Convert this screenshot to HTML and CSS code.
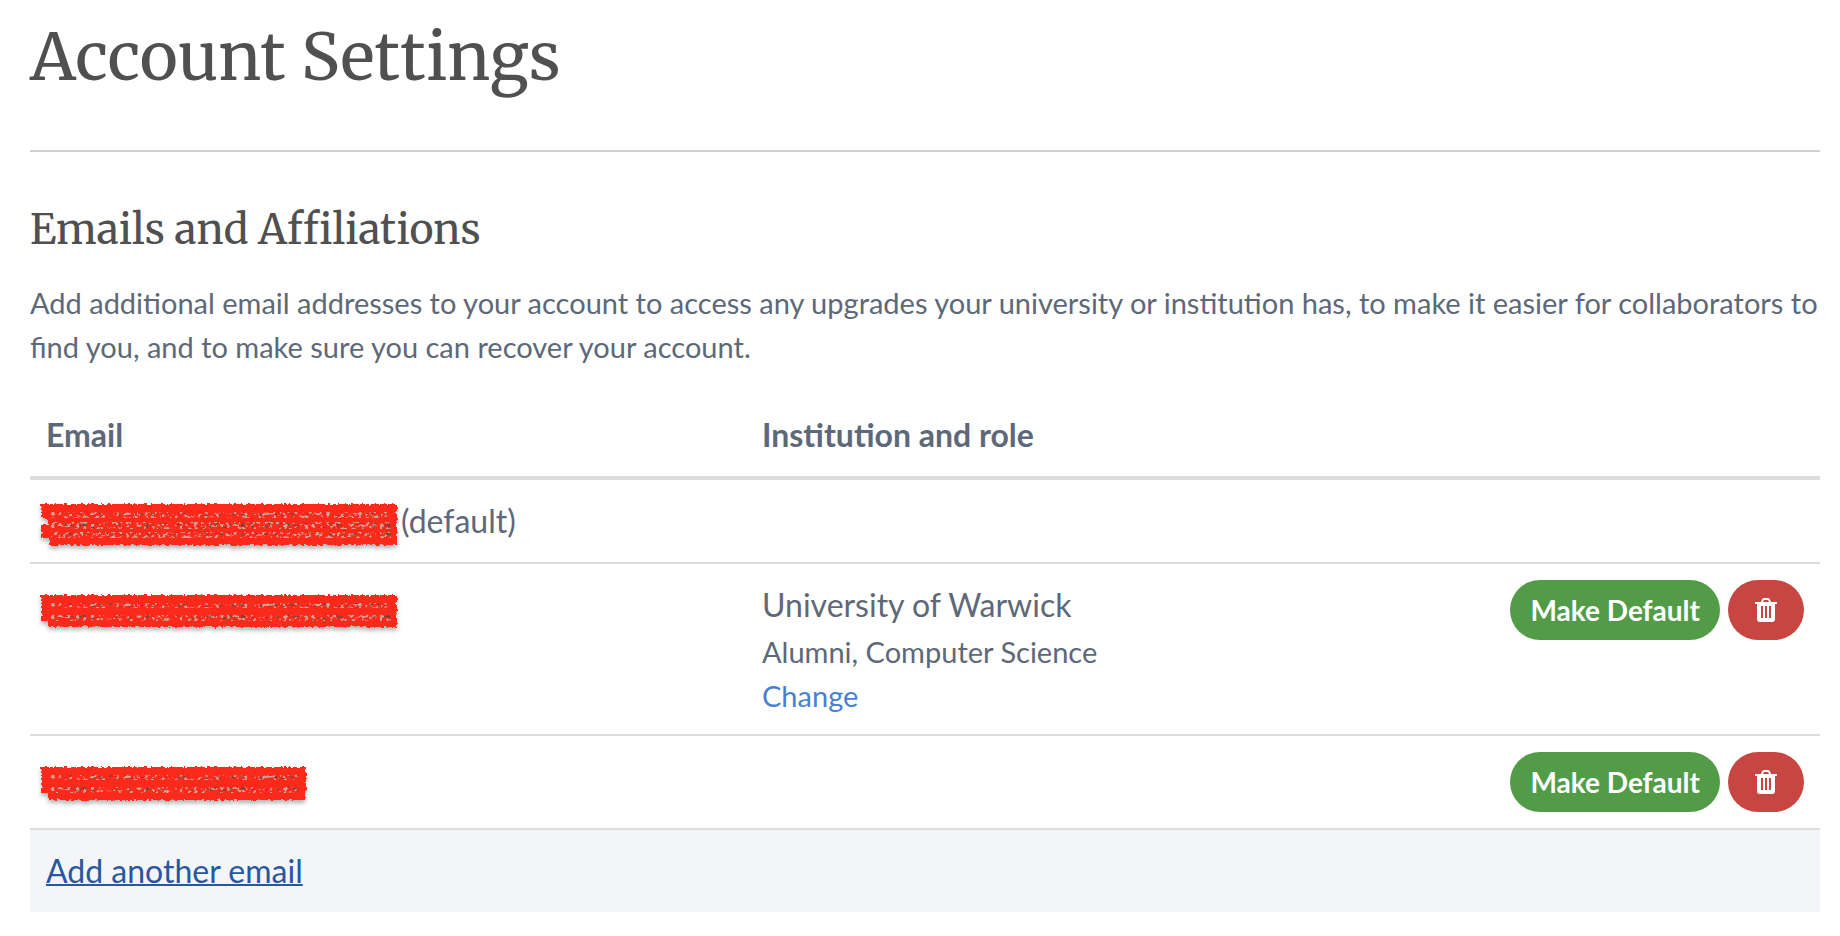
FILE: index.html
```html
<!DOCTYPE html>
<html lang="en">
  <head>
    <meta charset="UTF-8" />
    <meta name="viewport" content="width=device-width, initial-scale=1.0" />
    <title>Account Settings</title>
    <link rel="stylesheet" href="styles.css">
  </head>
  <body>
    <!-- shared svg shapes -->
    <svg class="defs" aria-hidden="true">
      <defs>
        <filter id="rough" x="-5%" y="-20%" width="110%" height="140%">
          <feTurbulence type="fractalNoise" baseFrequency="0.3" numOctaves="2" seed="4" result="noise" />
          <feDisplacementMap in="SourceGraphic" in2="noise" scale="5" xChannelSelector="R" yChannelSelector="G" />
        </filter>
        <filter id="grain" x="0" y="0" width="100%" height="100%">
          <feTurbulence type="fractalNoise" baseFrequency="0.28 0.34" numOctaves="2" seed="9" />
          <feColorMatrix values="0 0 0 0 0  0 0 0 0 0  0 0 0 0 0  9 0 0 0 -4.8" result="grain" />
          <feComposite in="SourceGraphic" in2="grain" operator="in" />
        </filter>
        <filter id="grain-dark" x="0" y="0" width="100%" height="100%">
          <feTurbulence type="fractalNoise" baseFrequency="0.22 0.34" numOctaves="2" seed="21" />
          <feColorMatrix values="0 0 0 0 0  0 0 0 0 0  0 0 0 0 0  9 0 0 0 -5.3" result="grain" />
          <feComposite in="SourceGraphic" in2="grain" operator="in" />
        </filter>
        <symbol id="trash" viewBox="0 0 22 24">
          <path fill="currentColor" fill-rule="evenodd" d="M6 4 7 1.500Q7.500 0 9 0h4q1.500 0 2 1.500L16 4h6v2h-2v15q0 3-3 3H5q-3 0-3-3V6H0V4zM8 4h6l-.6-1.600Q13.200 2 12.800 2H9.200q-.4 0-.6.4zM6 8v12h2V8zM10 8v12h2V8zM14 8v12h2V8z" />
        </symbol>
      </defs>
    </svg>

    <main class="container">
      <div class="page-header">
        <h1>Account Settings</h1>
      </div>

      <h2>Emails and Affiliations</h2>
      <p class="intro">
        Add additional email addresses to your account to access any upgrades your university or institution has, to make it easier for collaborators to find you, and to make sure you can recover your account.
      </p>

      <table class="emails-table">
        <thead>
          <tr>
            <th class="col-email" scope="col">Email</th>
            <th scope="col">Institution and role</th>
            <td></td>
          </tr>
        </thead>
        <tbody>
          <tr>
            <td>
              <div class="email">
                <svg class="scribble" width="356" height="42" role="img" aria-label="Hidden email">
                  <path class="ink" filter="url(#rough)" d="M0 0H356V41H8V34H0V21H7V15H0z" />
                  <path class="speck" filter="url(#grain)" d="M10 8H350V14H10zM10 18H350V25H10zM10 28H350V34H10z" />
                  <path class="speck-dark" filter="url(#grain-dark)" d="M24 9H350V12H24zM24 19H350V24H24zM24 29H350V31H24z" />
                </svg>
                <span>(default)</span>
              </div>
            </td>
            <td></td>
            <td></td>
          </tr>
          <tr>
            <td>
              <div class="email">
                <svg class="scribble" width="356" height="35" role="img" aria-label="Hidden email">
                  <path class="ink" filter="url(#rough)" d="M0 0H356V32H8V26H0z" />
                  <path class="speck" filter="url(#grain)" d="M10 8H350V13H10zM10 20H350V26H10z" />
                  <path class="speck-dark" filter="url(#grain-dark)" d="M24 8H350V12H24zM24 20H350V24H24z" />
                </svg>
              </div>
            </td>
            <td>
              <div>University of Warwick</div>
              <div class="small">Alumni, Computer Science</div>
              <div class="small"><a class="change-link" href="#">Change</a></div>
            </td>
            <td>
              <div class="actions">
                <button class="btn btn-success" type="button">Make Default</button>
                <button class="btn btn-danger" type="button" aria-label="Remove">
                  <svg width="22" height="24" aria-hidden="true"><use href="#trash" /></svg>
                </button>
              </div>
            </td>
          </tr>
          <tr>
            <td>
              <div class="email">
                <svg class="scribble" width="265" height="35" role="img" aria-label="Hidden email">
                  <path class="ink" filter="url(#rough)" d="M0 0H265V33H8V26H0z" />
                  <path class="speck" filter="url(#grain)" d="M10 8H258V13H10zM10 20H258V26H10z" />
                  <path class="speck-dark" filter="url(#grain-dark)" d="M24 8H258V12H24zM24 20H258V24H24z" />
                </svg>
              </div>
            </td>
            <td></td>
            <td>
              <div class="actions">
                <button class="btn btn-success" type="button">Make Default</button>
                <button class="btn btn-danger" type="button" aria-label="Remove">
                  <svg width="22" height="24" aria-hidden="true"><use href="#trash" /></svg>
                </button>
              </div>
            </td>
          </tr>
          <tr class="add-row">
            <td colspan="3"><a class="add-link" href="#">Add another email</a></td>
          </tr>
        </tbody>
      </table>
    </main>
  </body>
</html>
```

FILE: styles.css
```css
* {
  box-sizing: border-box;
}
body {
  margin: 0;
  background-color: #fff;
  color: #5d6879;
  font-family: Lato, sans-serif;
  font-size: 32px;
  line-height: 50px;
}
.defs {
  position: absolute;
  width: 0;
  height: 0;
}
.container {
  padding: 16px 20px 24px 30px;
}
h1,
h2 {
  margin: 0;
  color: #505050;
  font-family: Merriweather, "DejaVu Serif Condensed", "DejaVu Serif", serif;
  font-weight: 400;
}
h1 {
  font-size: 65px;
  line-height: 82px;
}
h2 {
  margin-top: 51px;
  font-size: 41px;
  line-height: 54px;
}
.page-header {
  padding-bottom: 52px;
  border-bottom: 2px solid #cfcfcf;
}
.intro {
  margin: 24px 0 25px;
  font-size: 29px;
  line-height: 44px;
}

.emails-table {
  width: 100%;
  border-collapse: separate;
  border-spacing: 0;
}
.emails-table th,
.emails-table td {
  padding: 16px;
  border-bottom: 2px solid #dcdddd;
  text-align: left;
  vertical-align: top;
}
.emails-table thead th,
.emails-table thead td {
  border-bottom-width: 4px;
}
.emails-table .add-row td {
  border-bottom: none;
  background-color: #f4f5f8;
}
.col-email {
  width: 40%;
}
.email {
  display: flex;
  align-items: flex-end;
  gap: 4px;
  height: 50px;
}
.small {
  font-size: 29px;
  line-height: 44px;
}

.scribble {
  margin-left: -5px;
  overflow: visible;
  filter: drop-shadow(0 3px 2px rgba(0, 0, 0, 0.3));
}
.ink {
  fill: #fd2b1c;
}
.speck {
  fill: #d3a093;
}
.speck-dark {
  fill: #76423f;
}

.actions {
  display: flex;
  justify-content: flex-end;
  gap: 8px;
}
.btn {
  display: flex;
  align-items: center;
  justify-content: center;
  height: 60px;
  padding: 0 20px;
  border: none;
  border-radius: 30px;
  color: #fff;
  font-family: inherit;
  font-size: 28px;
  font-weight: 700;
  cursor: pointer;
}
.btn-success {
  background-color: #529c48;
}
.btn-danger {
  width: 76px;
  background-color: #c84642;
}
.change-link {
  color: #4b7fd1;
  text-decoration: none;
}
.change-link:hover {
  text-decoration: underline;
}
.add-link {
  color: #2857a1;
  text-decoration-thickness: 2px;
}
```
